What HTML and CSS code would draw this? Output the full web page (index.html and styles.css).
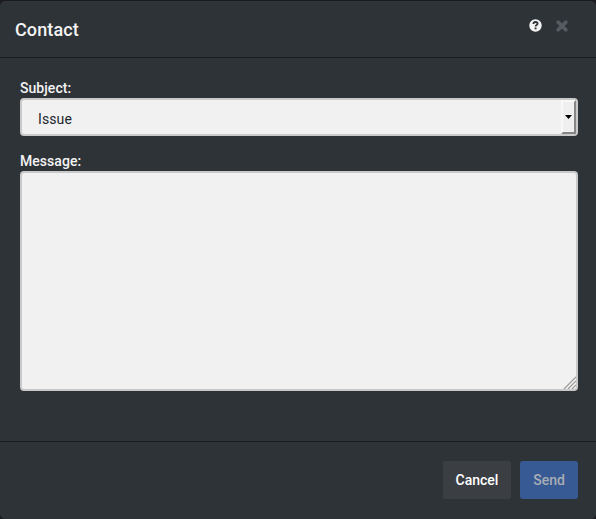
FILE: index.html
```html
<!DOCTYPE html>
<html lang="en">
<head>
<meta charset="utf-8">
<title>Contact</title>
<link rel="stylesheet" href="styles.css">
</head>
<body>
<form class="dialog">
  <header class="header">
    <h1 class="title">Contact</h1>
    <svg class="help" width="13" height="13" viewBox="0 0 13 13" role="img" aria-label="Help"><circle cx="6.5" cy="6.5" r="6.2" fill="#f4f4f4"/><path d="M4.4 5C4.5 3.6 5.3 3 6.5 3C7.8 3 8.6 3.8 8.6 4.8C8.6 6.2 6.6 6 6.6 7.5" fill="none" stroke="#2e3338" stroke-width="1.8"/><path d="M5.6 8.5h1.9v1.8H5.6z" fill="#2e3338"/></svg>
    <svg class="close" width="12" height="12" viewBox="0 0 12 12" role="img" aria-label="Close"><path d="M2.2 2.2L9.8 9.8M9.8 2.2L2.2 9.8" stroke="#575b60" stroke-width="3.6" stroke-linecap="round"/></svg>
  </header>
  <main class="body">
    <label class="label" for="subject">Subject:</label>
    <div class="select" id="subject" tabindex="0"><span class="value">Issue</span><span class="arrow"><svg width="7" height="4" viewBox="0 0 7 4"><path d="M0 0H7L3.5 4Z"/></svg></span></div>
    <label class="label" for="message">Message:</label>
    <div class="message-wrap">
      <textarea class="message" id="message"></textarea>
      <svg class="grip" width="13" height="13" viewBox="0 0 13 13"><path d="M1 13L13 1M5 13L13 5M9 13L13 9" stroke="#999" stroke-width="1.2"/></svg>
    </div>
  </main>
  <footer class="footer">
    <button class="button" type="button">Cancel</button>
    <button class="button send" type="button">Send</button>
  </footer>
</form>
</body>
</html>
```

FILE: styles.css
```css
* { box-sizing: border-box; }
body {
  margin: 0;
  background: #191b1e;
  font: 14px/20px Roboto, sans-serif;
  color: #f4f4f4;
}
.dialog {
  display: flex;
  flex-direction: column;
  height: 518px;
  margin-top: 1px;
  border-radius: 5px;
  background: #2e3338;
}
.header {
  display: flex;
  height: 57px;
  padding: 0 28px 0 15px;
  border-bottom: 1px solid #1b1d20;
}
.title {
  flex: 1;
  margin: 18px 0 0;
  font-size: 18px;
  line-height: 22px;
  font-weight: 500;
  letter-spacing: 0.1px;
}
.help { margin: 18px 14px 0 0; }
.close { margin-top: 19px; }
.body {
  flex: 1;
  padding: 20px 18px 0 20px;
}
.label {
  display: block;
  height: 20px;
  font-weight: 500;
  letter-spacing: 0.05px;
}
.select {
  display: flex;
  height: 38px;
  margin-bottom: 15px;
  border: 2px solid #c9c9c9;
  border-radius: 4px;
  background: #f1f1f1;
  color: #22262f;
}
.value {
  flex: 1;
  padding: 9px 0 0 16px;
  letter-spacing: 0.1px;
}
.arrow {
  display: flex;
  align-items: center;
  justify-content: center;
  width: 15px;
  border: 2px solid;
  border-color: #f8f8f8 #858585 #858585 #f8f8f8;
  background: #efefef;
}
.message-wrap { position: relative; height: 220px; }
.message {
  display: block;
  width: 100%;
  height: 220px;
  border: 2px solid #c9c9c9;
  border-radius: 4px;
  background: #f1f1f1;
  resize: none;
  outline: none;
}
.grip { position: absolute; right: 2px; bottom: 2px; }
.footer {
  display: flex;
  justify-content: flex-end;
  gap: 9px;
  height: 78px;
  padding: 19px 18px 0 0;
  border-top: 1px solid #1b1d20;
}
.button {
  width: 68px;
  height: 38px;
  padding: 0;
  border: 0;
  border-radius: 3px;
  background: #3b3f44;
  color: #fff;
  font: 500 14px/20px Roboto, sans-serif;
}
.send {
  width: 58px;
  background: #375a94;
  color: #a9adb5;
}
```
